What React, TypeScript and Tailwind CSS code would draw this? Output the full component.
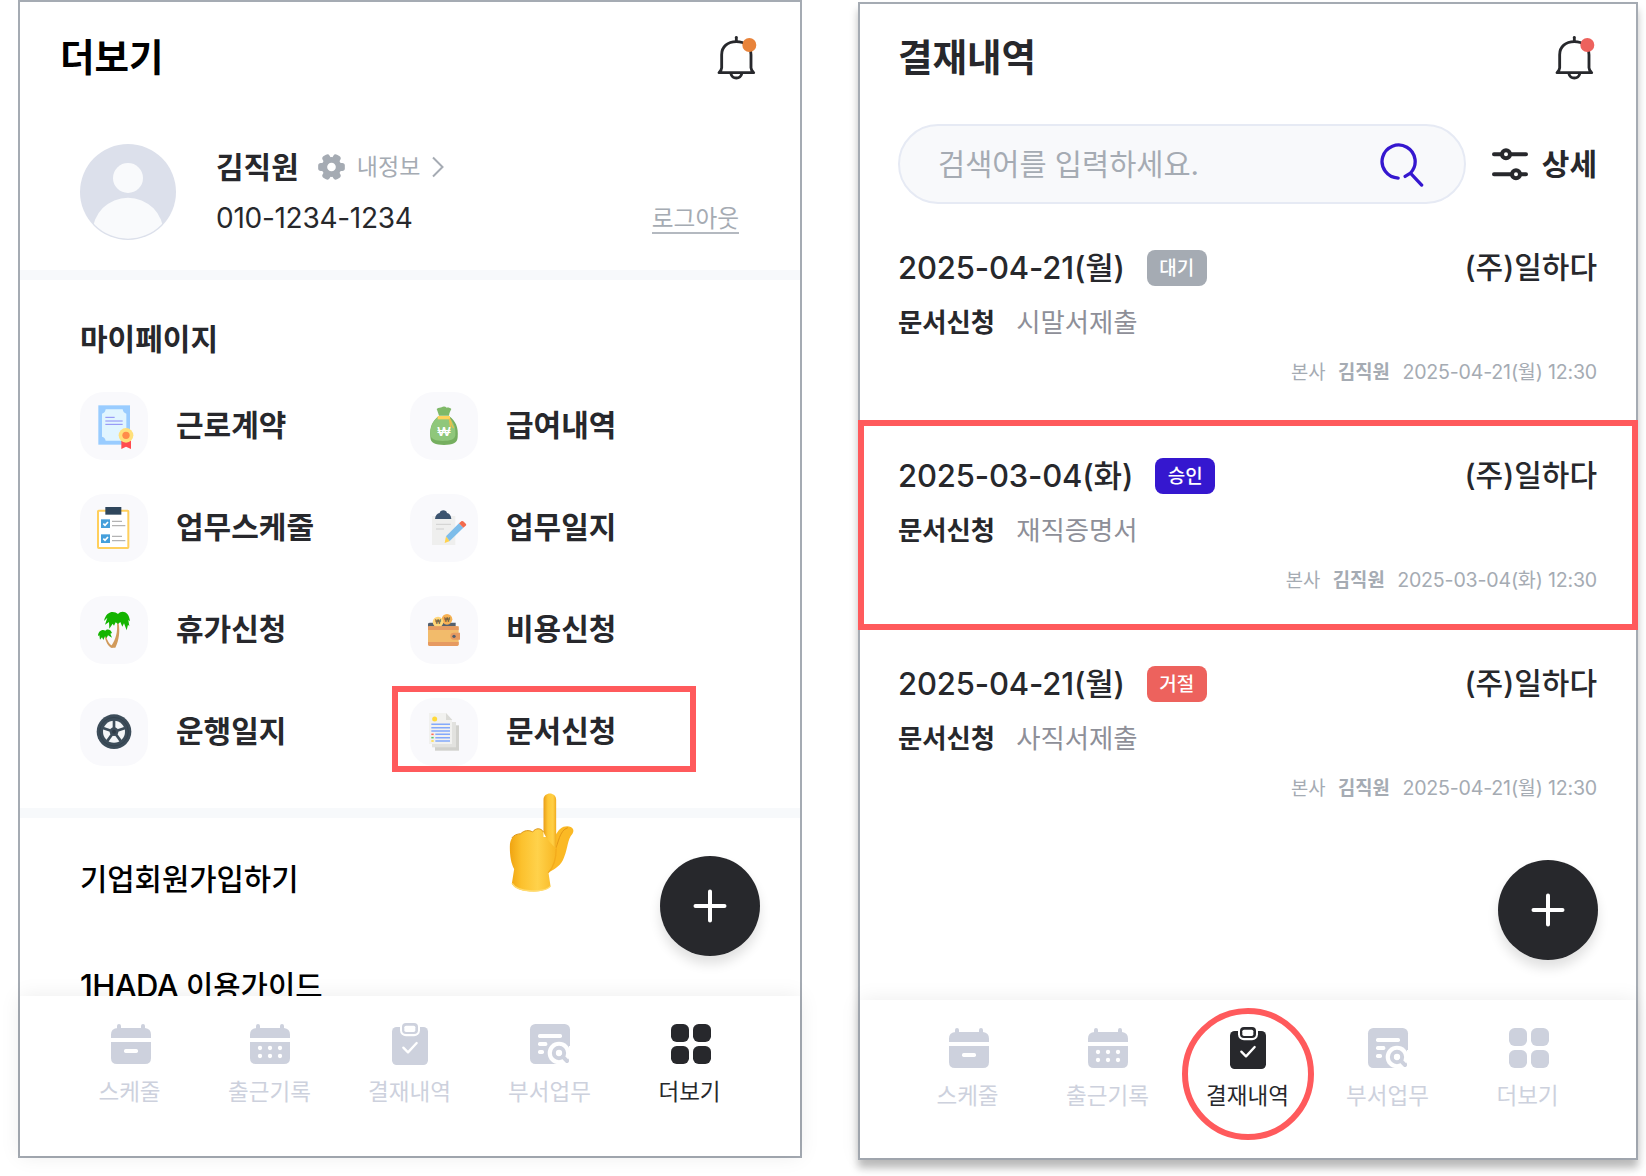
import type { ReactNode } from "react";
import clsx from "clsx";

type TabId = "schedule" | "attendance" | "approval" | "dept" | "more";

interface MenuItem {
  label: string;
  icon: ReactNode;
  highlighted?: boolean;
}

interface Approval {
  date: string;
  status: string;
  badgeClass: string;
  title: string;
  highlighted?: boolean;
}

/* ---------- icons ---------- */

function BellIcon({ dot }: { dot: string }) {
  return (
    <svg viewBox="668 45 130 140" className="mt-[3px] w-[43.33px] h-[46.67px]" fill="none" stroke="#27282c" strokeWidth="8.500" strokeLinecap="round" strokeLinejoin="round">
      <path d="M732 52V64" />
      <path d="M688 104C688 80 706 65 732 65C758 65 776 80 776 104V143C776 149 779 153 784 158H680C685 153 688 149 688 143Z" />
      <path d="M716 162C720 178 744 178 748 162" />
      <circle cx="771" cy="75" r="21" fill={dot} stroke="none" />
    </svg>
  );
}

function GearIcon() {
  return (
    <svg viewBox="0 0 80 78" className="w-[27px] h-[26px]">
      <g fill="#a5abb3">
        <circle cx="40" cy="39" r="30" />
        <rect x="0" y="27" width="80" height="24" rx="8" />
        <rect x="0" y="27" width="80" height="24" rx="8" transform="rotate(60 40 39)" />
        <rect x="0" y="27" width="80" height="24" rx="8" transform="rotate(120 40 39)" />
      </g>
      <circle cx="40" cy="39" r="13" fill="#fff" />
    </svg>
  );
}

function AvatarIcon() {
  return (
    <svg viewBox="0 0 288 288" className="size-24 shrink-0">
      <defs>
        <clipPath id="avatar">
          <circle cx="144" cy="144" r="140" />
        </clipPath>
      </defs>
      <circle cx="144" cy="144" r="144" fill="#dce0eb" />
      <circle cx="144" cy="102" r="45" fill="#f9fafc" />
      <circle cx="144" cy="268" r="107" fill="#f9fafc" clipPath="url(#avatar)" />
    </svg>
  );
}

function SearchIcon() {
  return (
    <svg viewBox="148 362 136 136" className="size-[45px]" fill="none" stroke="#3517cf" strokeWidth="10" strokeLinecap="round" strokeLinejoin="round">
      <path d="M206 471A50 50 0 1 1 243 456L227 466M243 456L277 492" />
    </svg>
  );
}

function FilterIcon() {
  return (
    <svg viewBox="0 0 108 98" className="w-9 h-[33px]" fill="none" stroke="#27282c" strokeLinecap="round">
      <path d="M6 18H102M6 78H102" strokeWidth="12" />
      <g fill="#fff" strokeWidth="12">
        <circle cx="42" cy="18" r="12" />
        <circle cx="72" cy="78" r="12" />
      </g>
    </svg>
  );
}

function ContractIcon() {
  return (
    <>
      <rect x="55" y="40" width="95" height="118" fill="#99ccff" />
      <path d="M77 52H128Q130 63 139 65V134Q130 136 128 146H77Q75 136 66 134V65Q75 63 77 52Z" fill="#e1f5ff" />
      <path d="M76 76H104M76 87H128M76 97H128" stroke="#8a8af5" strokeWidth="3" />
      <path d="M124 140H153V171L138 164L124 171Z" fill="#ff4b4f" />
      <circle cx="138" cy="130" r="22" fill="#ffe07a" />
      <circle cx="138" cy="130" r="11" fill="#ff8b4a" />
    </>
  );
}

function ChecklistIcon() {
  return (
    <>
      <rect x="54" y="50" width="91" height="112" rx="2" fill="#fff" stroke="#ffcf5c" strokeWidth="6" />
      <rect x="76" y="39" width="48" height="23" fill="#2f465c" />
      <rect x="63" y="76" width="27" height="26" fill="#459fdb" />
      <rect x="63" y="121" width="27" height="26" fill="#459fdb" />
      <path d="M70 89L75 94L84 84M70 134L75 139L84 129" fill="none" stroke="#fff" strokeWidth="5" />
      <path d="M96 82H126M96 95H136M96 127H126M96 140H136" stroke="#b3b3b3" strokeWidth="4" />
    </>
  );
}

function PalmIcon() {
  return (
    <>
      <path d="M111 82C113 108 108 130 94 149L94 155H106C118 132 120 105 116 82Z" fill="#d19a5b" />
      <path d="M74 122C78 138 84 150 93 155H98V150C88 146 82 134 78 121Z" fill="#d19a5b" />
      <path d="M114 54C103 43 78 44 72 75L82 65L75 86L87 78L88 98L98 83L102 89L107 79L114 84L121 78L127 92L132 82L140 103L144 86L148 91L145 72L150 76C147 45 125 42 114 54Z" fill="#14b400" />
      <path d="M76 104C68 98 54 104 54 120L58 118L60 131L66 124L70 132L75 121L80 126L84 118L96 125L91 113L96 111C92 98 80 98 76 104Z" fill="#14b400" />
    </>
  );
}

function WheelIcon() {
  return (
    <>
      <circle cx="102" cy="101" r="52" fill="#3d4d5a" />
      <circle cx="102" cy="101" r="43" fill="none" stroke="#33424e" strokeWidth="3" />
      <circle cx="102" cy="101" r="33" fill="#f4f6f8" />
      <g stroke="#3d4d5a" strokeWidth="8">
        <path d="M102 101V66" />
        <path d="M102 101V66" transform="rotate(72 102 101)" />
        <path d="M102 101V66" transform="rotate(144 102 101)" />
        <path d="M102 101V66" transform="rotate(216 102 101)" />
        <path d="M102 101V66" transform="rotate(288 102 101)" />
      </g>
      <circle cx="102" cy="101" r="13" fill="#3d4d5a" />
      <circle cx="102" cy="101" r="6" fill="#2e3b46" />
    </>
  );
}

function MoneyBagIcon() {
  return (
    <>
      <path d="M86 73H118C136 86 146 106 143 136C142 154 128 159 102 159C76 159 62 154 61 136C58 106 68 86 86 73Z" fill="#75ae5f" />
      <path d="M86 73H112C130 86 138 106 136 130C134 144 120 147 98 147C76 147 64 142 61 130C60 106 68 86 86 73Z" fill="#8fc77b" />
      <path d="M87 71C84 62 82 56 80 51C86 46 92 48 95 46C99 43 106 43 110 47C116 46 120 48 124 51C122 56 118 62 117 71Z" fill="#7fb968" />
      <path d="M83 72H120V82H83Z" fill="#ffd35c" />
      <path d="M119 80C124 86 122 96 131 108M118 80C120 92 122 102 121 108" stroke="#e8c04c" strokeWidth="4" fill="none" />
      <text x="81" y="132" textLength="42" lengthAdjust="spacingAndGlyphs" fontSize="36" fontWeight="600" fill="#fff">₩</text>
    </>
  );
}

function JournalIcon() {
  return (
    <>
      <rect x="66" y="66" width="70" height="87" fill="#efefee" />
      <path d="M75 75C76 64 82 58 89 57C90 46 110 46 111 57C118 58 123 64 124 75Z" fill="#3c5470" />
      <path d="M78 91H123M78 105H102" stroke="#cfcfcf" strokeWidth="3" />
      <path d="M108 127L120 141L104 147Z" fill="#ffd34f" />
      <path d="M108 127L147 88L160 101L119 141Z" fill="#7dbdea" />
      <path d="M147 88L155 81Q159 80 162 84L168 90Q170 93 167 95L160 101Z" fill="#f26b4e" />
    </>
  );
}

function WalletIcon() {
  return (
    <>
      <path d="M54 84Q54 80 60 80H137V96H54Z" fill="#54606e" />
      <circle cx="111" cy="70" r="16" fill="#f7b153" />
      <circle cx="84" cy="78" r="16" fill="#ffd77a" />
      <text x="102" y="77" textLength="18" lengthAdjust="spacingAndGlyphs" fontSize="17" fontWeight="600" fill="#6a5a41">₩</text>
      <text x="75" y="85" textLength="18" lengthAdjust="spacingAndGlyphs" fontSize="17" fontWeight="600" fill="#6a5a41">₩</text>
      <rect x="54" y="91" width="92" height="59" rx="5" fill="#f2bb6b" />
      <path d="M54 91H146V102H54ZM54 138H146V145Q146 150 140 150H60Q54 150 54 145Z" fill="#e69a61" />
      <path d="M132 110H150V131H132Q121 131 121 120Q121 110 132 110Z" fill="#e69a61" />
      <circle cx="132" cy="121" r="5" fill="#54606e" />
    </>
  );
}

function DocumentsIcon() {
  return (
    <>
      <rect x="75" y="82" width="72" height="76" fill="#d1d1cd" />
      <rect x="66" y="72" width="72" height="76" fill="#e2e2df" />
      <path d="M57 45H108L126 65V138H57Z" fill="#f1f1ef" />
      <path d="M108 45V66H127Z" fill="#dadad6" />
      <circle cx="74" cy="63" r="7.500" fill="#ffd93b" />
      <path d="M64 79H120M64 89H120M64 99H120M76 109H120M76 119H120M76 129H120" stroke="#83a9fb" strokeWidth="4.500" />
      <path d="M64 109H71" stroke="#ff6b57" strokeWidth="4.500" />
      <path d="M64 119H71" stroke="#59c66a" strokeWidth="4.500" />
      <path d="M64 129H71" stroke="#ffd93b" strokeWidth="4.500" />
    </>
  );
}

function PointingHand() {
  return (
    <svg viewBox="205 35 200 303" className="absolute left-[488px] top-[790px] w-[67px] h-[101px]">
      <defs>
        <linearGradient id="palm" x1="0" x2="1">
          <stop offset="0" stopColor="#f0a411" />
          <stop offset="0.25" stopColor="#fcc12d" />
          <stop offset="0.6" stopColor="#ffd24b" />
          <stop offset="1" stopColor="#f8b723" />
        </linearGradient>
        <linearGradient id="finger" x1="0" x2="1">
          <stop offset="0" stopColor="#e99d18" />
          <stop offset="0.35" stopColor="#fec736" />
          <stop offset="0.75" stopColor="#ffcf45" />
          <stop offset="1" stopColor="#f0aa1d" />
        </linearGradient>
      </defs>
      <path d="M330 195C346 178 350 138 382 138C399 138 405 150 398 160C382 178 385 200 373 230C365 255 345 266 327 276Z" fill="#fbb924" />
      <path d="M345 210C356 190 358 150 384 142" fill="none" stroke="#e39616" strokeWidth="3" />
      <path d="M223 266L216 310C232 340 318 340 332 317L326 277C340 262 348 240 349 215V170H311V155C303 142 288 142 278 155C268 148 252 150 243 160C222 162 210 172 210 200C210 228 214 250 223 266Z" fill="url(#palm)" />
      <path d="M311 58C311 33 349 33 349 58V205C340 195 318 176 311 155Z" fill="url(#finger)" />
      <path d="M311 155C303 142 288 142 278 155C268 148 252 150 243 160C232 161 222 164 216 173" fill="none" stroke="#dc9518" strokeWidth="3" />
      <path d="M349 205C349 240 340 262 325 277" fill="none" stroke="#f3ab1c" strokeWidth="4" />
      <path d="M217 309C232 338 318 338 332 317" fill="none" stroke="#ffdb70" strokeWidth="4" />
    </svg>
  );
}

const tabIcons: Record<TabId, ReactNode> = {
  schedule: (
    <g transform="translate(3 0)">
      <path d="M18 14V6Q18 0 24 0Q30 0 30 6V12H90V6Q90 0 96 0Q102 0 102 6V12Q120 14 120 32V42H0V32Q0 14 18 12Z" />
      <path d="M0 54H120V102Q120 120 102 120H18Q0 120 0 102Z" />
      <rect x="39" y="75" width="42" height="12" rx="5" fill="#fff" />
    </g>
  ),
  attendance: (
    <>
      <path d="M18 14V6Q18 0 24 0Q30 0 30 6V12H90V6Q90 0 96 0Q102 0 102 6V12Q120 14 120 32V42H0V32Q0 14 18 12Z" />
      <path d="M0 54H120V102Q120 120 102 120H18Q0 120 0 102Z" />
      <g fill="#fff">
        <circle cx="30" cy="72" r="6.500" />
        <circle cx="60" cy="72" r="6.500" />
        <circle cx="90" cy="72" r="6.500" />
        <circle cx="30" cy="96" r="6.500" />
        <circle cx="60" cy="96" r="6.500" />
        <circle cx="90" cy="96" r="6.500" />
      </g>
    </>
  ),
  approval: (
    <>
      <rect x="6" y="9" width="108" height="114" rx="14" />
      <rect x="30" y="-9" width="60" height="46" rx="18" fill="#fff" />
      <rect x="36" y="-3" width="48" height="33" rx="12" />
      <rect x="43" y="5" width="33" height="19" rx="5" fill="#fff" />
      <path d="M40 71L54 85L80 57" fill="none" stroke="#fff" strokeWidth="7" strokeLinecap="round" strokeLinejoin="round" />
    </>
  ),
  dept: (
    <>
      <rect width="120" height="120" rx="16" />
      <g fill="#fff">
        <rect x="24" y="30" width="72" height="12" rx="5" />
        <rect x="24" y="54" width="28" height="12" rx="5" />
        <rect x="24" y="78" width="18" height="12" rx="5" />
        <circle cx="87" cy="87" r="34" />
        <rect x="84" y="112" width="40" height="10" />
        <rect x="117" y="66" width="6" height="56" />
      </g>
      <circle cx="87" cy="87" r="15.500" fill="none" stroke="currentColor" strokeWidth="12" />
      <path d="M98 98L111 111" stroke="currentColor" strokeWidth="12" strokeLinecap="round" />
    </>
  ),
  more: (
    <g transform="translate(3 0)">
      <rect width="54" height="54" rx="17" />
      <rect x="66" width="54" height="54" rx="17" />
      <rect y="66" width="54" height="54" rx="17" />
      <rect x="66" y="66" width="54" height="54" rx="17" />
    </g>
  ),
};

/* ---------- data ---------- */

const tabs: { id: TabId; label: string }[] = [
  { id: "schedule", label: "스케줄" },
  { id: "attendance", label: "출근기록" },
  { id: "approval", label: "결재내역" },
  { id: "dept", label: "부서업무" },
  { id: "more", label: "더보기" },
];

const menu: MenuItem[] = [
  { label: "근로계약", icon: <ContractIcon /> },
  { label: "급여내역", icon: <MoneyBagIcon /> },
  { label: "업무스케줄", icon: <ChecklistIcon /> },
  { label: "업무일지", icon: <JournalIcon /> },
  { label: "휴가신청", icon: <PalmIcon /> },
  { label: "비용신청", icon: <WalletIcon /> },
  { label: "운행일지", icon: <WheelIcon /> },
  { label: "문서신청", icon: <DocumentsIcon />, highlighted: true },
];

const approvals: Approval[] = [
  { date: "2025-04-21(월)", status: "대기", badgeClass: "bg-[#a5abb3]", title: "시말서제출" },
  { date: "2025-03-04(화)", status: "승인", badgeClass: "bg-[#3517cf]", title: "재직증명서", highlighted: true },
  { date: "2025-04-21(월)", status: "거절", badgeClass: "bg-[#ed625d]", title: "사직서제출" },
];

/* ---------- shared parts ---------- */

function TabBar({ active, circled }: { active: TabId; circled?: boolean }) {
  return (
    <nav className="relative flex flex-1 justify-center bg-white shadow-[0_0_20px_rgba(0,0,0,0.08)]">
      {tabs.map((tab) => (
        <div
          key={tab.id}
          className={clsx(
            "relative flex w-[140px] flex-col items-center pt-7",
            tab.id === active ? "text-[#27282c]" : "text-[#cdd1dd]"
          )}
        >
          <svg viewBox="0 0 120 120" className="size-10 overflow-visible" fill="currentColor">
            {tabIcons[tab.id]}
          </svg>
          <span className="mt-3 pr-px text-[22.5px] leading-8 whitespace-nowrap">{tab.label}</span>
          {circled && tab.id === active && (
            <span className="absolute left-1 top-2 size-[132px] rounded-full border-[6px] border-[#ff5a5c]" />
          )}
        </div>
      ))}
    </nav>
  );
}

function AddButton({ className }: { className: string }) {
  return (
    <button className={clsx("absolute flex size-[100px] items-center justify-center rounded-full bg-[#27282c] shadow-[0_8px_12px_rgba(0,0,0,0.12)]", className)}>
      <svg viewBox="0 0 34 34" className="size-[34px]" stroke="#fff" strokeWidth="4" strokeLinecap="round">
        <path d="M17 2.500V31.500M2.500 17H31.500" />
      </svg>
    </button>
  );
}

/* ---------- screens ---------- */

function MoreScreen() {
  return (
    <section className="relative flex h-[1158px] w-[784px] shrink-0 flex-col border-2 border-[#a5abb3] bg-white">
      <header className="flex h-[110px] items-center justify-between pl-10 pr-[42px]">
        <h1 className="mt-0.5 text-[37.5px] leading-[48px] font-bold text-black">더보기</h1>
        <BellIcon dot="#e8833a" />
      </header>

      <div className="flex h-[158px] px-[60px] pt-8">
        <AvatarIcon />
        <div className="ml-10 flex flex-1 flex-col">
          <div className="flex h-[46px] items-center">
            <span className="text-[30px] font-bold">김직원</span>
            <span className="ml-[19px] flex"><GearIcon /></span>
            <span className="ml-3 text-[23px] text-[#a5abb3]">내정보</span>
            <svg viewBox="0 0 12 22" className="ml-3 h-[22px] w-3" fill="none" stroke="#a5abb3" strokeWidth="2">
              <path d="M1 1.500L10.500 11L1 20.500" />
            </svg>
          </div>
          <div className="mt-1.5 flex h-11 items-center justify-between pr-px">
            <span className="text-[28px] tracking-[-0.01em]">010-1234-1234</span>
            <a className="mt-[3px] border-b-2 border-[#b4b9c0] text-[23.7px] leading-[26px] text-[#a5abb3]">로그아웃</a>
          </div>
        </div>
      </div>

      <div className="h-2.5 bg-[#f7f9fb]" />

      <div className="h-[528px] px-[60px] pt-[39px]">
        <h2 className="text-[30px] leading-10 font-semibold">마이페이지</h2>
        <div className="mt-[33px] grid grid-cols-[330px_330px] gap-y-[34px]">
          {menu.map((item) => (
            <div key={item.label} className="relative flex items-center gap-7">
              <span className="size-[68px] rounded-3xl bg-[#f9f9fc]">
                <svg viewBox="0 0 204 204" className="size-full">{item.icon}</svg>
              </span>
              <span className="pb-0.5 text-[30px] leading-10 font-semibold">{item.label}</span>
              {item.highlighted && (
                <span className="absolute -left-[18px] -top-3 h-[86px] w-[304px] border-[6px] border-[#ff5a5c]" />
              )}
            </div>
          ))}
        </div>
      </div>

      <div className="h-2.5 bg-[#f7f9fb]" />

      <div className="h-[178px] overflow-hidden px-[60px] pt-[41px] text-[29.7px] leading-10 font-medium text-black">
        <p>기업회원가입하기</p>
        <p className="mt-[67px]">
          <span className="text-[31px] tracking-[-0.02em]">1HADA</span> 이용가이드
        </p>
      </div>

      <TabBar active="more" />
      <AddButton className="left-[640px] top-[854px]" />
      <PointingHand />
    </section>
  );
}

function ApprovalRow({ item }: { item: Approval }) {
  return (
    <li className="relative h-[208px] pl-[38px] pr-[39px] pt-[38px]">
      <div className="flex h-9 items-center">
        <span className="text-[31px] font-medium tracking-[-0.005em]">{item.date}</span>
        <span className={clsx("ml-[22px] h-9 w-[60px] rounded-lg pt-px text-center text-[19px] leading-9 font-medium text-white", item.badgeClass)}>
          {item.status}
        </span>
        <span className="ml-auto pb-px text-[30px] font-medium">(주)일하다</span>
      </div>
      <div className="mt-5 flex h-[34px] items-center gap-[21px] text-[26.4px]">
        <span className="font-semibold">문서신청</span>
        <span className="text-[#8e8f98]">{item.title}</span>
      </div>
      <div className="mt-[21px] flex h-6 items-center justify-end gap-[12.5px] text-[18.8px] text-[#a5abb3]">
        <span>본사</span>
        <span className="font-semibold">김직원</span>
        <span className="text-[19.6px] tracking-[-0.01em]">{item.date} 12:30</span>
      </div>
      {item.highlighted && (
        <span className="absolute -left-0.5 top-0 h-[210px] w-[780px] border-[6px] border-[#ff5a5c]" />
      )}
    </li>
  );
}

function ApprovalScreen() {
  return (
    <section className="relative mt-0.5 flex h-[1158px] w-[780px] shrink-0 flex-col border-2 border-[#a5abb3] bg-white shadow-[0_8px_8px_rgba(0,0,0,0.25)]">
      <header className="flex h-[106px] items-center justify-between pl-[38px] pr-10">
        <h1 className="mt-0.5 text-[37.5px] leading-[48px] font-bold">결재내역</h1>
        <BellIcon dot="#ed625d" />
      </header>

      <div className="mt-3.5 flex h-20 items-center pl-[38px] pr-[39px]">
        <div className="flex h-20 w-[568px] items-center justify-between rounded-full border-2 border-[#e6eaf4] bg-[#f8f9fb] pl-[38px] pr-10">
          <span className="text-[29.5px] text-[#a5abb3]">검색어를 입력하세요.</span>
          <SearchIcon />
        </div>
        <span className="ml-[26px] flex"><FilterIcon /></span>
        <span className="ml-auto text-[30px] font-semibold whitespace-nowrap">상세</span>
      </div>

      <ul className="mt-2 h-[788px]">
        {approvals.map((item, i) => (
          <ApprovalRow key={i} item={item} />
        ))}
      </ul>

      <TabBar active="approval" circled />
      <AddButton className="left-[638px] top-[856px]" />
    </section>
  );
}

export default function App() {
  return (
    <main
      lang="ko"
      className="flex h-[1176px] w-[1646px] gap-14 overflow-hidden bg-white pl-[18px] text-[#27282c] font-[Inter,'Noto_Sans_CJK_KR',sans-serif]"
    >
      <MoreScreen />
      <ApprovalScreen />
    </main>
  );
}
